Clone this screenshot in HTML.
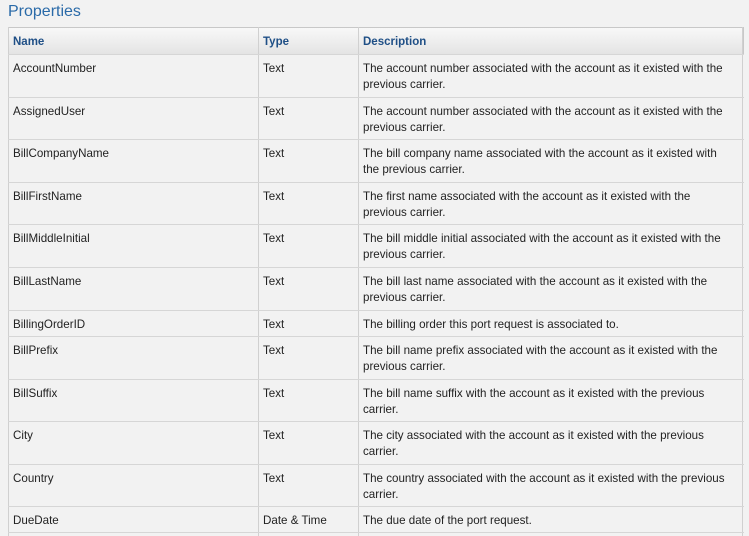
<!DOCTYPE html>
<html><head><meta charset="utf-8"><style>
body{margin:0;width:749px;height:536px;overflow:hidden;background:#f2f2f2;font-family:"Liberation Sans","DejaVu Sans",sans-serif;color:#222;position:relative}
.t{position:absolute;left:8px;top:3px;font-size:16px;color:#2a6aa8}
.hd{position:absolute;left:8px;top:27px;width:734px;height:26px;background:linear-gradient(#f8f8f8,#e4e4e4);border:1px solid #c8c8c8}
.c{position:absolute;font-size:11.6px;line-height:16px}
.h{font-weight:bold;color:#1f4f86;font-size:11.5px}
.hl{position:absolute;left:8px;width:736px;height:1px;background:#d6d6d6}
.vl{position:absolute;top:27px;height:509px;width:1px;background:#d0d0d0}
</style></head><body>
<div class="t">Properties</div>
<div class="hd"></div>
<div class="vl" style="left:8px"></div><div class="vl" style="left:258px"></div><div class="vl" style="left:358px"></div><div class="vl" style="left:742px"></div>
<div class="c h" style="left:13px;top:34px">Name</div>
<div class="c h" style="left:263px;top:34px">Type</div>
<div class="c h" style="left:363px;top:34px">Description</div>
<div id="rows"></div>
<script>
var d=[[54,"AccountNumber","Text","The account number associated with the account as it existed with the<br>previous carrier."],
[97,"AssignedUser","Text","The account number associated with the account as it existed with the<br>previous carrier."],
[139,"BillCompanyName","Text","The bill company name associated with the account as it existed with<br>the previous carrier."],
[182,"BillFirstName","Text","The first name associated with the account as it existed with the<br>previous carrier."],
[224,"BillMiddleInitial","Text","The bill middle initial associated with the account as it existed with the<br>previous carrier."],
[267,"BillLastName","Text","The bill last name associated with the account as it existed with the<br>previous carrier."],
[310,"BillingOrderID","Text","The billing order this port request is associated to."],
[336,"BillPrefix","Text","The bill name prefix associated with the account as it existed with the<br>previous carrier."],
[379,"BillSuffix","Text","The bill name suffix with the account as it existed with the previous<br>carrier."],
[421,"City","Text","The city associated with the account as it existed with the previous<br>carrier."],
[464,"Country","Text","The country associated with the account as it existed with the previous<br>carrier."],
[506,"DueDate","Date &amp; Time","The due date of the port request."]];
var h="";d.forEach(function(r){h+='<div class="hl" style="top:'+r[0]+'px"></div><div class="c" style="left:13px;top:'+(r[0]+7)+'px">'+r[1]+'</div><div class="c" style="left:263px;top:'+(r[0]+7)+'px">'+r[2]+'</div><div class="c" style="left:363px;top:'+(r[0]+7)+'px">'+r[3]+'</div>';});
h+='<div class="hl" style="top:532px"></div>';
document.getElementById("rows").innerHTML=h;
</script>
</body></html>
